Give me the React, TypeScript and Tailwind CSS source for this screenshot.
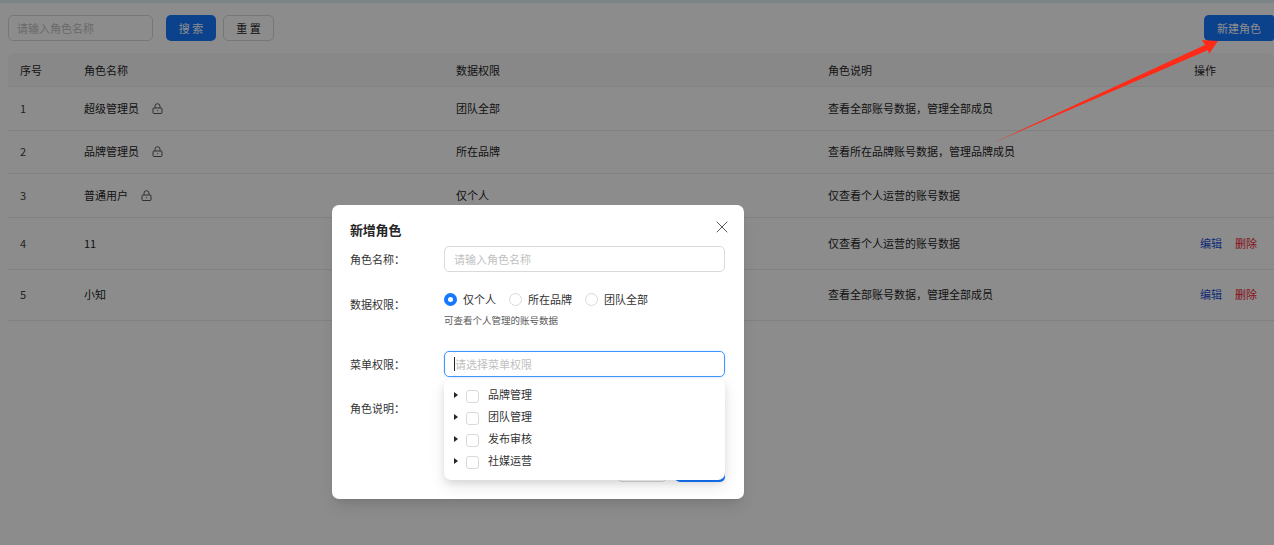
import { X } from "lucide-react"

const roles = [
  { id: 1, name: "超级管理员", scope: "团队全部", desc: "查看全部账号数据，管理全部成员", locked: true, h: "h-[44px]" },
  { id: 2, name: "品牌管理员", scope: "所在品牌", desc: "查看所在品牌账号数据，管理品牌成员", locked: true, h: "h-[43px]" },
  { id: 3, name: "普通用户", scope: "仅个人", desc: "仅查看个人运营的账号数据", locked: true, h: "h-[44px]" },
  { id: 4, name: "11", scope: "仅个人", desc: "仅查看个人运营的账号数据", locked: false, h: "h-[52px]" },
  { id: 5, name: "小知", scope: "团队全部", desc: "查看全部账号数据，管理全部成员", locked: false, h: "h-[51px]" },
]

const menus = ["品牌管理", "团队管理", "发布审核", "社媒运营"]

function LockIcon() {
  return (
    <svg width="11" height="11" viewBox="0 0 11 11" fill="none" stroke="#595959" strokeWidth="1" className="ml-[13px] shrink-0">
      <path d="M3 5V3.2a2.5 2.5 0 0 1 5 0V5" />
      <rect x="1" y="5" width="9" height="5.5" rx="1" />
      <rect x="5" y="7.2" width="1" height="1" fill="#595959" stroke="none" />
    </svg>
  )
}

function Radio({ label, checked }: { label: string; checked?: boolean }) {
  return (
    <label className="flex items-center gap-[6px]">
      {checked ? (
        <span className="flex h-[13px] w-[13px] items-center justify-center rounded-full bg-[#1677ff]">
          <span className="h-[5px] w-[5px] rounded-full bg-white" />
        </span>
      ) : (
        <span className="h-[13px] w-[13px] rounded-full border border-[#d9d9d9] bg-white" />
      )}
      <span className="text-[11px] leading-[14px] text-[#333]">{label}</span>
    </label>
  )
}

export default function App() {
  return (
    <div className="relative h-[545px] w-[1274px] overflow-hidden bg-white font-['Noto_Sans_CJK_SC','Noto_Sans',sans-serif] text-[11px] text-[#262626]">
      <div className="h-[3px] bg-[#e3f0f7]" />

      <div className="flex items-center pl-2 pt-3">
        <input
          readOnly
          placeholder="请输入角色名称"
          className="h-[26px] w-[145px] rounded-[5px] border border-[#d9d9d9] px-[8px] text-[11px] placeholder:text-[#bfbfbf]"
        />
        <button className="ml-[13px] h-[26px] w-[50px] rounded-[5px] bg-[#1677ff] text-[11px] text-white">搜 索</button>
        <button className="ml-[7px] h-[26px] w-[51px] rounded-[5px] border border-[#d9d9d9] bg-white text-[11px]">重 置</button>
        <button className="ml-auto h-[26px] w-[70px] rounded-l-[5px] rounded-r-[3px] bg-[#1677ff] text-[11px] text-white">新建角色</button>
      </div>

      <table className="ml-2 mt-3 w-[1266px] table-fixed border-collapse text-left">
        <colgroup>
          <col className="w-[63px]" />
          <col className="w-[372px]" />
          <col className="w-[372px]" />
          <col className="w-[367px]" />
          <col />
        </colgroup>
        <thead>
          <tr className="h-[33px] border-b border-[#ececec] bg-[#f7f7f7]">
            <th className="rounded-tl-[6px] pl-3 pt-[2px] font-normal">序号</th>
            <th className="pl-[13px] pt-[2px] font-normal">角色名称</th>
            <th className="pl-[13px] pt-[2px] font-normal">数据权限</th>
            <th className="pl-[13px] pt-[2px] font-normal">角色说明</th>
            <th className="rounded-tr-[6px] pl-3 pt-[2px] font-normal">操作</th>
          </tr>
        </thead>
        <tbody>
          {roles.map((r) => (
            <tr key={r.id} className={`${r.h} border-b border-[#ececec]`}>
              <td className="pl-3 text-[#434343]">{r.id}</td>
              <td className="pl-[13px]">
                <div className="flex items-center">
                  {r.name}
                  {r.locked && <LockIcon />}
                </div>
              </td>
              <td className="pl-[13px]">{r.scope}</td>
              <td className="pl-[13px]">{r.desc}</td>
              <td className="pl-[18px]">
                {!r.locked && (
                  <div className="flex gap-[13px]">
                    <span className="text-[#1a4fd6]">编辑</span>
                    <span className="text-[#f5222d]">删除</span>
                  </div>
                )}
              </td>
            </tr>
          ))}
        </tbody>
      </table>

      {/* mask */}
      <div className="absolute inset-0 bg-black/45" />

      {/* modal */}
      <div className="absolute left-[332px] top-[205px] h-[294px] w-[412px] rounded-[7px] bg-white pl-[18px] pr-[19px] pt-[15px] shadow-lg">
        <X size={20} strokeWidth={1.2} className="absolute right-[12px] top-[12px] text-[#595959]" />
        <h2 className="text-[13px] font-semibold leading-[19px] tracking-[-0.2px] text-[#262626]">新增角色</h2>

        <div className="mt-[7px] flex items-center">
          <span className="w-[94px] text-[#333]">角色名称：</span>
          <input
            readOnly
            placeholder="请输入角色名称"
            className="h-[26px] flex-1 rounded-[5px] border border-[#d9d9d9] px-[9px] text-[11px] placeholder:text-[#bfbfbf]"
          />
        </div>

        <div className="mt-[19px] flex">
          <span className="w-[94px] pt-[5px] text-[#333]">数据权限：</span>
          <div className="flex-1">
            <div className="flex h-[16px] items-center gap-[13px]">
              <Radio label="仅个人" checked />
              <Radio label="所在品牌" />
              <Radio label="团队全部" />
            </div>
            <p className="mt-[6px] text-[9.5px] leading-[14px] text-[#595959]">可查看个人管理的账号数据</p>
          </div>
        </div>

        <div className="mt-[24px] flex items-center">
          <span className="w-[94px] text-[#333]">菜单权限：</span>
          <div className="flex h-[26px] flex-1 items-center rounded-[5px] border border-[#4096ff] pl-[9px] text-[#bfbfbf] shadow-[0_0_0_1px_rgba(5,145,255,0.08)]">
            <span className="h-[14px] w-px bg-[#262626]" />
            请选择菜单权限
          </div>
        </div>

        <div className="mt-[19px] flex">
          <span className="w-[94px] pt-[4px] text-[#333]">角色说明：</span>
          <div className="h-[50px] flex-1 rounded-[5px] border border-[#d9d9d9]" />
        </div>

        <div className="mt-[10px] flex justify-end gap-[8px]">
          <button className="h-[26px] w-[50px] rounded-[5px] border border-[#d9d9d9] bg-white">取消</button>
          <button className="h-[26px] w-[50px] rounded-[5px] bg-[#1677ff] text-white">确定</button>
        </div>

        {/* tree dropdown */}
        <div className="absolute left-[112px] top-[174px] h-[101px] w-[281px] rounded-[7px] bg-white pl-[10px] pt-[5px] shadow-[0_6px_16px_rgba(0,0,0,0.1),0_3px_6px_rgba(0,0,0,0.08)]">
          {menus.map((m) => (
            <div key={m} className="flex h-[22px] items-center text-[#333]">
              <span className="mb-[1px] h-0 w-0 border-y-[3px] border-l-[4px] border-y-transparent border-l-[#262626]" />
              <span className="ml-[8px] mt-[3px] h-[13px] w-[13px] rounded-[3px] border border-[#d9d9d9] bg-white" />
              <span className="ml-[9px] mb-[1px]">{m}</span>
            </div>
          ))}
        </div>
      </div>

      {/* red annotation arrow */}
      <svg className="absolute inset-0" width="1274" height="545" viewBox="0 0 1274 545">
        <polygon points="993,143 1205,45 1202,40 1218,41 1209,54 1208,50" fill="#ff2a18" />
      </svg>
    </div>
  )
}
